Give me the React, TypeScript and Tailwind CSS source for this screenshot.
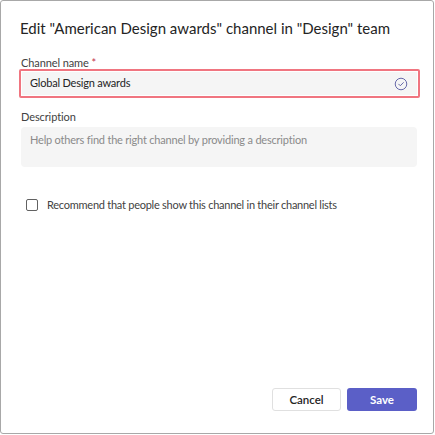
import { useState } from 'react'

function CheckCircle() {
  return (
    <svg width="14" height="14" viewBox="0 0 16 16" fill="none">
      <circle cx="8" cy="8" r="6.6" stroke="#6264a7" strokeWidth="1.1" />
      <path d="M5.4 8.2l1.8 1.8 3.5-3.6" stroke="#6264a7" strokeWidth="1.1" strokeLinecap="round" strokeLinejoin="round" />
    </svg>
  )
}

export default function App() {
  const [name, setName] = useState('Global Design awards')
  const [description, setDescription] = useState('')
  const [recommend, setRecommend] = useState(false)

  return (
    <div className="w-[435px] h-[435px] bg-white" style={{ fontFamily: 'Lato, "Noto Sans", sans-serif' }}>
      <div className="w-[434px] h-[434px] border border-[#a8a8a8] rounded-[3px] flex flex-col pl-[18px] pr-[15px] text-[#242424]">
        <h1 className="mt-[16px] ml-[1px] text-[15px] leading-[22px] font-normal whitespace-nowrap">
          Edit "American Design awards" channel in "Design" team
        </h1>

        {/* channel name field */}
        <label className="mt-[17px] ml-[2px] text-[11px] leading-[14px] tracking-[-0.1px] text-[#424242]">
          Channel name <span className="text-[#c4314b]">*</span>
        </label>
        <div className="mt-[-1px] h-[29px] w-[401px] rounded-[2px] p-[1px] border-solid border-2 border-[#f07580]">
          <div className="h-full bg-[#f5f5f5] rounded-[1px] flex items-center pl-[8px] pr-[9px]">
            <input
              value={name}
              onChange={(e) => setName(e.target.value)}
              className="flex-1 bg-transparent outline-none text-[11px] tracking-[-0.2px] text-[#242424]"
            />
            <CheckCircle />
          </div>
        </div>

        {/* description */}
        <label className="mt-[12px] ml-[2px] text-[11px] leading-[14px] tracking-[-0.1px] text-[#424242]">Description</label>
        <textarea
          value={description}
          onChange={(e) => setDescription(e.target.value)}
          placeholder="Help others find the right channel by providing a description"
          className="mt-[3px] ml-[2px] w-[396px] h-[40px] resize-none bg-[#f5f5f5] rounded-[4px] px-[9px] py-[5px] text-[11px] leading-[16px] tracking-[-0.2px] outline-none placeholder:text-[#8a8a8a]"
        />

        <label className="mt-[30px] ml-[7px] flex items-center gap-[9px] cursor-pointer">
          <input
            type="checkbox"
            checked={recommend}
            onChange={(e) => setRecommend(e.target.checked)}
            className="appearance-none w-[12px] h-[12px] border border-[#616161] rounded-[2px] checked:bg-[#5b5fc7] checked:border-[#5b5fc7]"
          />
          <span className="text-[11px] tracking-[-0.25px] text-[#424242]">Recommend that people show this channel in their channel lists</span>
        </label>

        <div className="mt-auto mb-[22px] flex justify-end gap-[6px] pr-[1px]">
          <button className="w-[69px] h-[23px] border border-[#e0e0e0] rounded-[3px] bg-white text-[11.5px] font-semibold text-[#242424]">
            Cancel
          </button>
          <button className="w-[70px] h-[23px] rounded-[3px] bg-[#5b5fc7] text-[11.5px] font-bold text-white">
            Save
          </button>
        </div>
      </div>
    </div>
  )
}
